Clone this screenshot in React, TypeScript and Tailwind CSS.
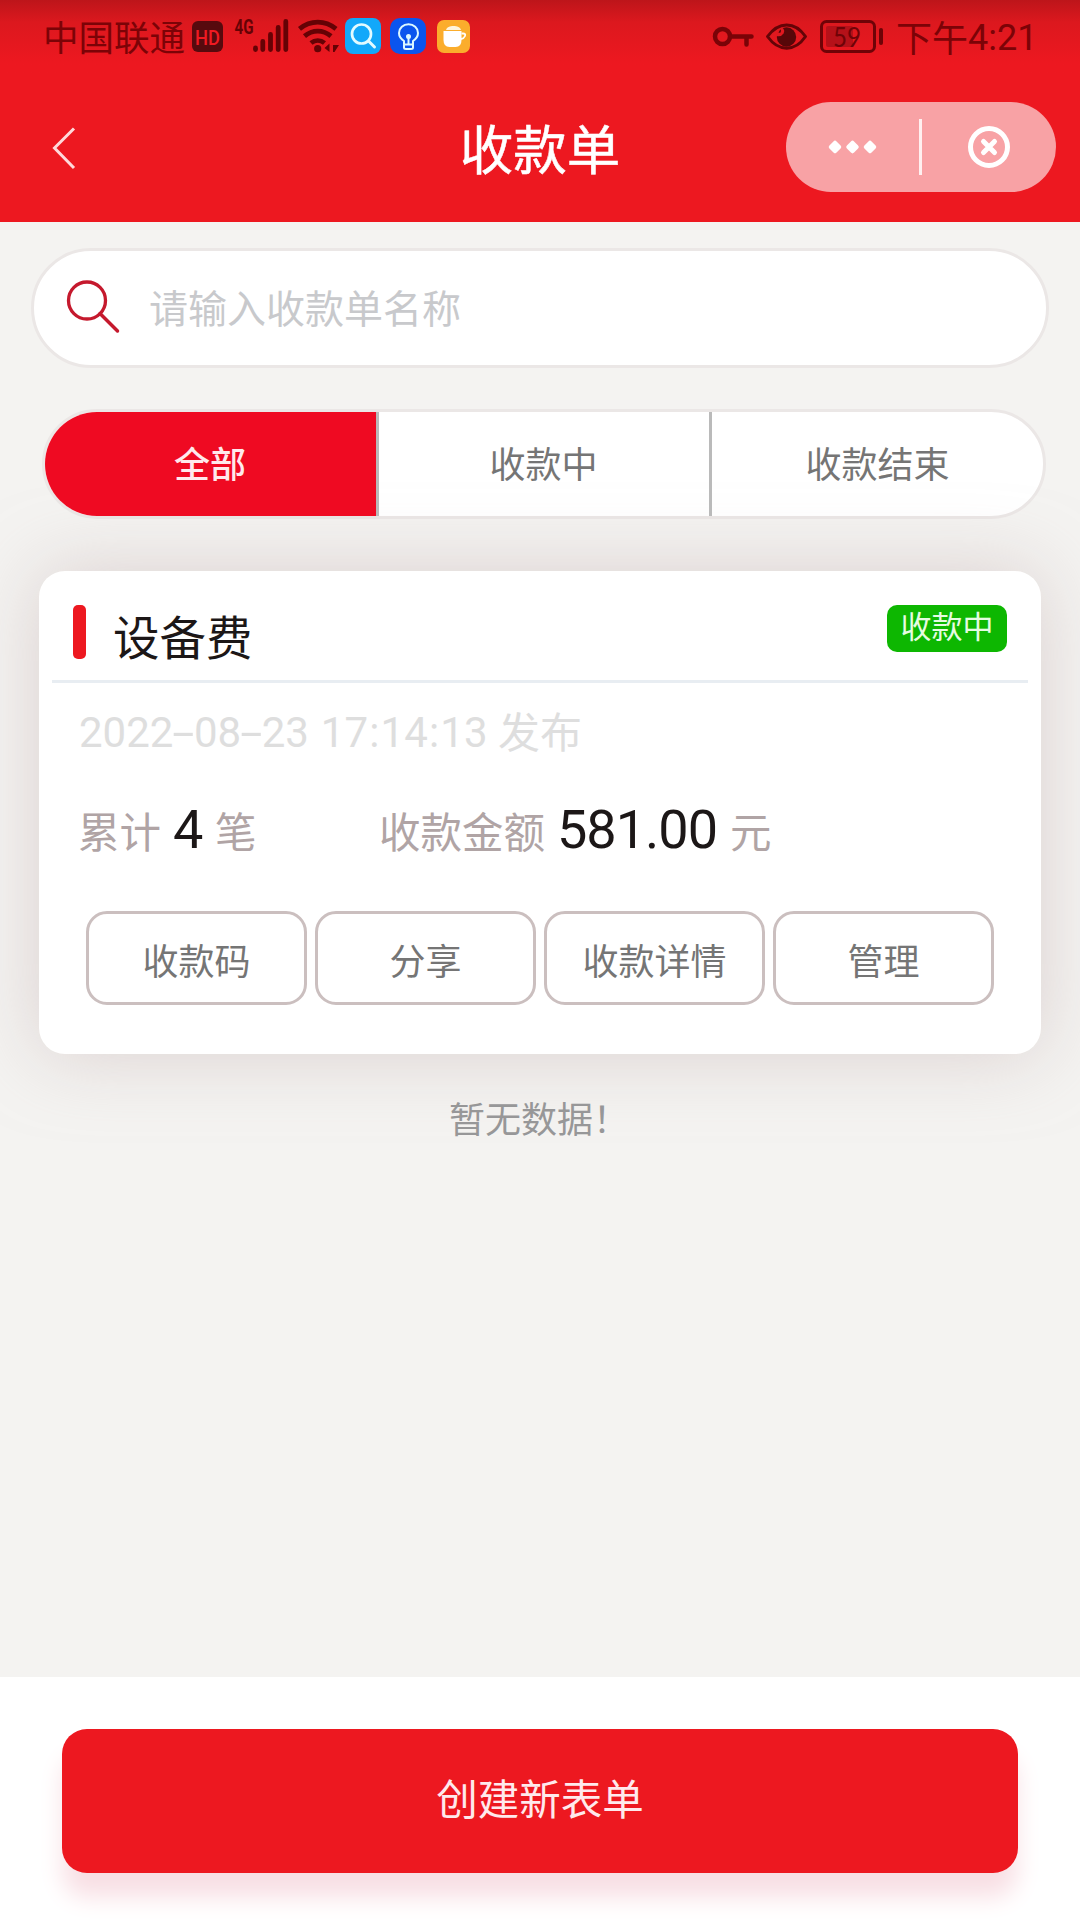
import React from "react";

function StatusBar() {
  return (
    <div className="flex h-[74px] items-start bg-linear-to-b from-[#bd151a] via-[#dc181e] via-30% to-[#ed1820] to-85% text-[#7c0307]">
      <div className="flex h-[74px] pl-[43px] pt-px">
        <span className="w-[149px] text-[35.500px] leading-[70px] whitespace-nowrap">中国联通</span>
        <svg className="h-[74px] w-[310px]" viewBox="192 1 310 74" fill="none">
          <rect x="192" y="21" width="31" height="31" rx="6" fill="#570a0e" />
          <text x="207.5" y="44.500" textAnchor="middle" fontSize="20" fontWeight="500" fontFamily="Roboto, sans-serif" textLength="25" lengthAdjust="spacingAndGlyphs" fill="#f01a22">HD</text>
          <text x="234.500" y="34" fontSize="21" fontWeight="700" fontFamily="Roboto, sans-serif" textLength="19" lengthAdjust="spacingAndGlyphs" fill="#650205">4G</text>
          <g stroke="#650205" strokeWidth="4.800" strokeLinecap="round">
            <path d="M255.500 48v1.500M262.800 41.500v8M270.500 34.500v15M278.200 27.500v22M285.800 21.500v28" />
          </g>
          <g stroke="#650205" strokeWidth="4.800">
            <path d="M299.500 28.800c11-9 25.500-9 36.500 0M304.500 36.200c8-6.700 18.500-6.700 26.500 0M311 43c4-3.300 9.500-3.300 13.500 0" />
          </g>
          <circle cx="317.700" cy="48.700" r="3.600" fill="#650205" />
          <path d="M324.500 48l5-4.500v8.500zM333 45h6l-4.500 7h-1.500z" fill="#650205" />
          <rect x="345" y="18" width="36" height="36" rx="8" fill="#12a8fa" />
          <circle cx="361.500" cy="34" r="9.500" stroke="#e2fbff" strokeWidth="2.700" />
          <path d="M368.500 41l6 6" stroke="#e2fbff" strokeWidth="3" strokeLinecap="round" />
          <rect x="390" y="18" width="36" height="36" rx="10" fill="#0b55ee" />
          <g stroke="#dcf8ff" strokeWidth="2" strokeLinejoin="round">
            <path d="M404 44.500v-3.500c-3-2-5-4.800-5-8a9.500 8.800 0 0 1 19 0c0 3.200-2 6-5 8v3.500zM404 45v2.500q0 1.500 2 1.500h5q2 0 2-1.500V45M408.500 37v7" />
            <circle cx="408.500" cy="36.500" r="1.500" fill="#dcf8ff" />
          </g>
          <rect x="437" y="20" width="33" height="33" rx="7" fill="#fbad2c" />
          <path d="M443.500 31h18v9q0 7-6 7h-6q-6 0-6-7z" fill="#fff" />
          <path d="M446 30c1-5.500 14-5.500 15 0z" fill="#fff5dd" />
          <path d="M461.500 33.500h1.500q3 0 2 2.500t-4 3" stroke="#fff" strokeWidth="1.800" />
        </svg>
      </div>
      <div className="ml-auto flex h-[74px] pr-[46px] pt-px">
        <svg className="h-[74px] w-[186px]" viewBox="710 1 186 74" fill="none">
          <circle cx="722.500" cy="36.500" r="7.500" stroke="#7a0307" strokeWidth="4.500" />
          <path d="M730.500 36.500H751.500M746.500 37v7.500" stroke="#7a0307" strokeWidth="4.500" strokeLinecap="round" />
          <path d="M767.500 36.500c11-15.500 27.500-15.500 38 0c-10.500 15.500-27 15.500-38 0z" stroke="#650407" strokeWidth="3" strokeLinejoin="round" />
          <circle cx="786.500" cy="37" r="9.700" fill="#570709" />
          <path d="M782 27.500q3.500 2.500 1.500 6t-7 2.500q.5-6 5.500-8.500z" fill="#e0181f" />
          <path d="M778.500 33q.5-2.500 2.500-3.800q0 2-.3 3.200z" fill="#570709" />
          <rect x="821.500" y="21.500" width="53" height="30" rx="5" stroke="#6f0307" strokeWidth="3" />
          <rect x="826" y="26" width="27" height="21" rx="2" fill="#b51119" />
          <rect x="879" y="28" width="4" height="17" rx="2" fill="#6f0307" />
          <text x="847" y="46.500" textAnchor="middle" fontSize="27" fontFamily="Lato, Roboto, sans-serif" textLength="28" lengthAdjust="spacingAndGlyphs" fill="#6f0307">59</text>
        </svg>
        <span className="flex w-[138px] text-[36px] leading-[70px] whitespace-nowrap">
          下午<span className="font-[Roboto] font-normal leading-[74px]">4:21</span>
        </span>
      </div>
    </div>
  );
}

function Header() {
  return (
    <header className="h-[222px] bg-[#ed1820]">
      <StatusBar />
      <div className="grid h-[148px] grid-cols-[1fr_270px_1fr] text-white">
        <button className="h-[148px] pl-[50px]" aria-label="返回">
          <svg className="h-[148px] w-[30px]" viewBox="50 74 30 148" fill="none">
            <path d="M74 128.500L54.500 148L74 168" stroke="#ffd9da" strokeWidth="3" />
          </svg>
        </button>
        <h1 className="text-center text-[53.500px] leading-[145px] [-webkit-text-stroke:0.500px_white]">收款单</h1>
        <div className="flex justify-end pr-6 pt-7">
          <div className="flex h-[90px] w-[270px] items-center rounded-full bg-[#f8a2a5]">
            <svg className="h-[90px] w-[270px]" viewBox="786 102 270 90" fill="none">
              <g fill="#fff" stroke="#fff" strokeWidth="4.500" strokeLinejoin="round">
                <path d="M835 143l4 4-4 4-4-4zM852.500 143l4 4-4 4-4-4zM870 143l4 4-4 4-4-4z" />
              </g>
              <rect x="919" y="119" width="3" height="56" fill="#fff0f0" />
              <circle cx="989" cy="147" r="18.500" stroke="#fff" strokeWidth="5" />
              <path d="M983.500 141.500l11 11M994.500 141.500l-11 11" stroke="#fff" strokeWidth="5" strokeLinecap="round" />
            </svg>
          </div>
        </div>
      </div>
    </header>
  );
}

const tabs = ["全部", "收款中", "收款结束"];
const actions = ["收款码", "分享", "收款详情", "管理"];

function Hyphen() {
  return <span className="inline-block w-[20.500px] scale-x-[1.900] text-center">-</span>;
}

function Colon() {
  return <span className="inline-block w-[12.500px] text-center">:</span>;
}

export default function App() {
  return (
    <div className="flex h-[1920px] w-[1080px] flex-col overflow-hidden bg-[#f4f3f1] font-['Noto_Sans_CJK_SC',sans-serif]">
      <Header />
      <main className="flex-1">
        <div className="ml-[31px] mt-[26px] flex h-[120px] w-[1018px] items-center rounded-full border-[3px] border-[#ebe7e6] bg-white pl-[30px]">
          <svg className="h-[60px] w-[60px]" viewBox="64 278 60 60" fill="none" stroke="#c5192d" strokeWidth="3.300">
            <circle cx="87" cy="300.500" r="18.500" />
            <path d="M100 313.500L117.500 331" strokeWidth="3.500" strokeLinecap="round" />
          </svg>
          <span className="ml-[25px] pb-[4px] text-[39px] leading-[110px] text-[#c8c9cc]">请输入收款单名称</span>
        </div>

        <div className="ml-[42px] mt-[41px] grid h-[110px] w-[1004px] grid-cols-[334px_333px_1fr] overflow-hidden rounded-full border-[3px] border-[#ebe7e6] bg-white text-center text-[36px] leading-[100px] text-[#757575]">
          {tabs.map((t, i) => (
            <div
              key={t}
              className={
                i === 0
                  ? "border-r-[3px] border-[#bababa] bg-[#ef0a22] pr-px font-medium text-[#ffe9ec]"
                  : i === 1
                    ? "border-r-[3px] border-[#bababa] pr-px"
                    : ""
              }
            >
              {t}
            </div>
          ))}
        </div>

        <section className="ml-[39px] mt-[52px] h-[483px] w-[1002px] rounded-[26px] bg-white px-[13px] shadow-[0_0_75px_rgba(195,175,175,0.5)]">
          <div className="flex h-[112px] border-b-[3px] border-[#e8edf2] pl-[21px] pr-[21px] pt-[34px]">
            <span className="h-[54px] w-[13px] rounded-[5px] bg-[#ed1820]" />
            <h2 className="ml-[27px] text-[46.500px] leading-[59px] text-[#1c1717]">设备费</h2>
            <span className="ml-auto h-[47px] w-[120px] rounded-[10px] bg-[#0db701] text-center text-[31px] leading-[40px] text-[#e5fce2]">收款中</span>
          </div>

          <div className="flex h-[100px] pl-[27px] text-[42px] leading-[94px] text-[#dedede]">
            <span className="w-[419px] whitespace-nowrap pt-[3px] font-[Roboto]">
              2022<Hyphen />08<Hyphen />23<span className="inline-block w-[12px]"> </span>17<Colon />14<Colon />13
            </span>
            <span>发布</span>
          </div>

          <div className="flex h-[128px] whitespace-nowrap pl-[26px] text-[41.500px] leading-[94px] text-[#b0a4a5]">
            <span className="w-[95px]">累计</span>
            <span className="w-[42px] font-[Roboto] text-[54px] tracking-[-1px] leading-[93px] text-[#1c1717]">4</span>
            <span className="w-[164px]">笔</span>
            <span className="w-[178px]">收款金额</span>
            <span className="w-[173px] font-[Roboto] text-[54px] tracking-[-1px] leading-[93px] text-[#1c1717]">581.00</span>
            <span>元</span>
          </div>

          <div className="flex gap-2 pl-[34px]">
            {actions.map((a) => (
              <button
                key={a}
                className="h-[94px] w-[221px] rounded-[21px] border-[3px] border-[#cbbfbf] pt-[2px] text-center text-[36px] leading-[86px] text-[#757575]"
              >
                {a}
              </button>
            ))}
          </div>
        </section>

        <p className="mt-[36px] pr-[2px] text-center text-[36px] leading-[54px] text-[#979798]">暂无数据！</p>
      </main>

      <footer className="h-[243px] bg-white px-[62px] pt-[52px]">
        <button className="block h-[144px] w-full rounded-[25px] bg-[#ed1820] pb-[8px] text-center text-[41.500px] leading-[136px] text-[#ffe9ec] shadow-[0_25px_24px_-1px_#f8dfe4]">
          创建新表单
        </button>
      </footer>
    </div>
  );
}
